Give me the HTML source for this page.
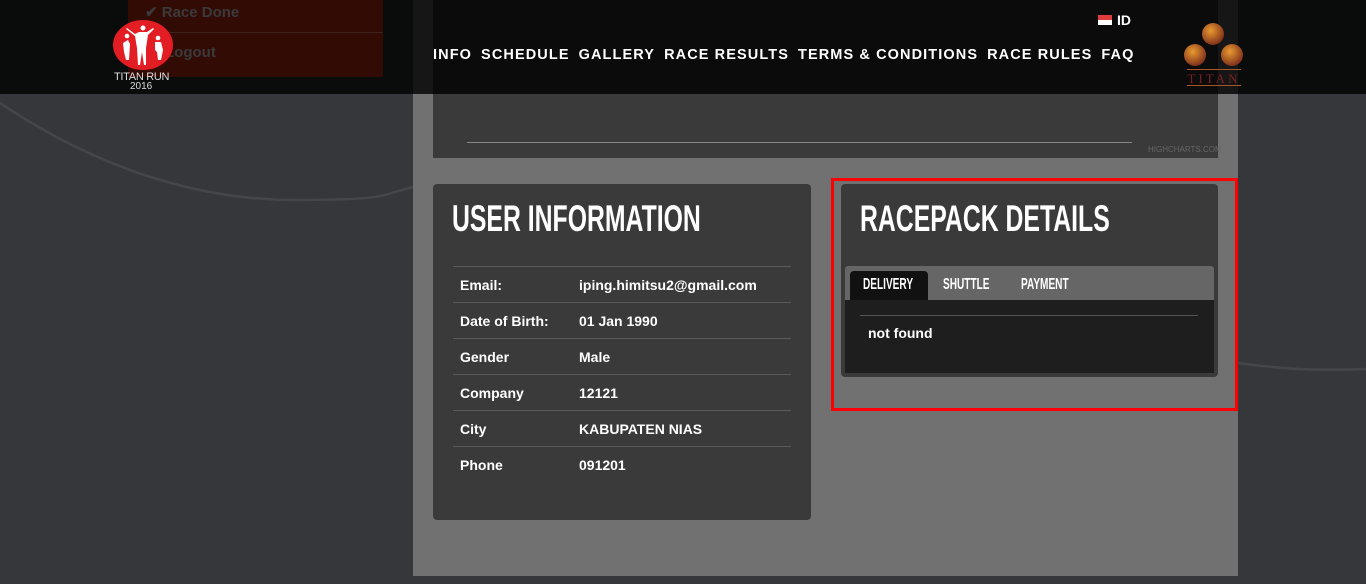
<!DOCTYPE html>
<html><head><meta charset="utf-8"><style>
*{margin:0;padding:0;box-sizing:border-box}
body{width:1366px;height:584px;overflow:hidden;background:#36373b;font-family:"Liberation Sans",sans-serif;position:relative;color:#fff}
.abs{position:absolute}
.panel{left:413px;top:0;width:825px;height:576px;background:#717171}
.chart{left:433px;top:0;width:785px;height:158px;background:#3a3a3a}
.card{background:#3a3a3a;border-radius:4px}
.title{font-family:"Liberation Sans Narrow","Liberation Sans",sans-serif;font-stretch:condensed;font-size:37px;font-weight:bold;transform:scaleX(.67);transform-origin:left;white-space:nowrap}
table{border-collapse:collapse;width:338px;font-size:14px;font-weight:bold}
td{height:36px;border-top:1px solid #5a5a5a;padding-left:7px}
.hdr{left:0;top:0;width:1366px;height:94px;background:rgba(0,0,0,.8)}
.nav{top:47px;left:433px;font-weight:bold;font-size:14.5px;letter-spacing:1.1px;white-space:nowrap}
.nav span{margin-right:9px}
.tab{font-size:16px;font-weight:bold;transform:scaleX(.63);transform-origin:left;white-space:nowrap}
</style></head><body>
<svg class="abs" style="left:0;top:0" width="1366" height="584"><path d="M0 103 C100 170 200 200 295 200 S380 195 413 187" stroke="#45464a" stroke-width="2.5" fill="none"/><path d="M1238 363 Q1300 372 1366 369" stroke="#45464a" stroke-width="2.5" fill="none"/></svg>
<div class="abs panel"></div>
<div class="abs chart"><div class="abs" style="left:34px;top:142px;width:665px;height:1px;background:#888"></div><div class="abs" style="left:715px;top:145px;font-size:8px;color:#666">HIGHCHARTS.COM</div></div>
<div class="abs card" style="left:433px;top:184px;width:378px;height:336px">
 <div class="abs title" style="left:19px;top:14px">USER INFORMATION</div>
 <table class="abs" style="left:20px;top:82px">
 <tr><td style="width:119px">Email:</td><td>iping.himitsu2@gmail.com</td></tr>
 <tr><td>Date of Birth:</td><td>01 Jan 1990</td></tr>
 <tr><td>Gender</td><td>Male</td></tr>
 <tr><td>Company</td><td>12121</td></tr>
 <tr><td>City</td><td>KABUPATEN NIAS</td></tr>
 <tr><td>Phone</td><td>091201</td></tr>
 </table>
</div>
<div class="abs card" style="left:841px;top:184px;width:377px;height:193px">
 <div class="abs title" style="left:19px;top:14px">RACEPACK DETAILS</div>
 <div class="abs" style="left:4px;top:82px;width:369px;height:34px;background:#666;border-radius:3px 3px 0 0"></div>
 <div class="abs" style="left:9px;top:87px;width:78px;height:29px;background:#111;border-radius:4px 4px 0 0"></div>
 <div class="abs tab" style="left:22px;top:92px">DELIVERY</div>
 <div class="abs tab" style="left:102px;top:92px">SHUTTLE</div>
 <div class="abs tab" style="left:180px;top:92px">PAYMENT</div>
 <div class="abs" style="left:4px;top:116px;width:369px;height:73px;background:#1e1e1e"></div>
 <div class="abs" style="left:19px;top:131px;width:338px;height:1px;background:#555"></div>
 <div class="abs" style="left:27px;top:141px;font-size:14px;font-weight:bold">not found</div>
</div>
<div class="abs" style="left:831px;top:178px;width:407px;height:233px;border:3px solid #f00"></div>
<div class="abs" style="left:128px;top:0;width:255px;height:77px;background:#ff3a1a"></div>
<div class="abs hdr"></div>
<div class="abs" style="left:128px;top:32px;width:255px;height:1px;background:#40201a"></div>
<div class="abs" style="left:145px;top:3px;font-size:15px;font-weight:bold;color:#3a3a3a">✔ Race Done</div>
<div class="abs" style="left:165px;top:44px;font-size:15px;font-weight:bold;color:#3a3a3a">Logout</div>
<div class="abs" style="left:113px;top:20px;width:60px;height:50px;border-radius:50%;background:#e31d24"></div>
<svg class="abs" style="left:113px;top:20px" width="60" height="50"><g fill="#fff"><path d="M14 8 L22 14 L26 12 L34 12 L40 8 L41 9 L35 15 L33 28 L33 45 L31 45 L29 32 L27 45 L25 45 L24 28 L22 16 L13 9Z"/><circle cx="30" cy="8" r="2.5"/><path d="M10 23 L15 20 L17 24 L16 40 L13 40 L11 32Z"/><circle cx="14" cy="16" r="2.3"/><path d="M42 22 L48 22 L50 30 L48 40 L45 40 L44 32 L42 30Z"/><circle cx="45" cy="18" r="2.3"/></g></svg>
<div class="abs" style="left:114px;top:71px;font-size:11px;color:#ddd;letter-spacing:-.3px">TITAN RUN</div>
<div class="abs" style="left:130px;top:81px;font-size:10px;color:#ddd">2016</div>
<div class="abs" style="left:1098px;top:15px;width:14px;height:10px;background:linear-gradient(#e03c3c 50%,#fff 50%)"></div>
<div class="abs" style="left:1117px;top:12px;font-size:14px;font-weight:bold">ID</div>
<div class="abs nav"><span>INFO</span><span>SCHEDULE</span><span>GALLERY</span><span>RACE RESULTS</span><span>TERMS &amp; CONDITIONS</span><span>RACE RULES</span><span>FAQ</span></div>
<svg class="abs" style="left:1180px;top:20px" width="66" height="70"><defs><radialGradient id="g" cx=".4" cy=".35" r=".7"><stop offset="0" stop-color="#e89a30"/><stop offset="1" stop-color="#7a2a1a"/></radialGradient></defs><circle cx="33" cy="14" r="11" fill="url(#g)"/><circle cx="15" cy="35" r="11" fill="url(#g)"/><circle cx="52" cy="35" r="11" fill="url(#g)"/><rect x="7" y="49" width="54" height="1" fill="#a8552a"/><rect x="7" y="65" width="54" height="1" fill="#a8552a"/><text x="34" y="63" text-anchor="middle" font-family="Liberation Serif" font-size="13" letter-spacing="3" fill="#7a2020">TITAN</text></svg>
</body></html>
